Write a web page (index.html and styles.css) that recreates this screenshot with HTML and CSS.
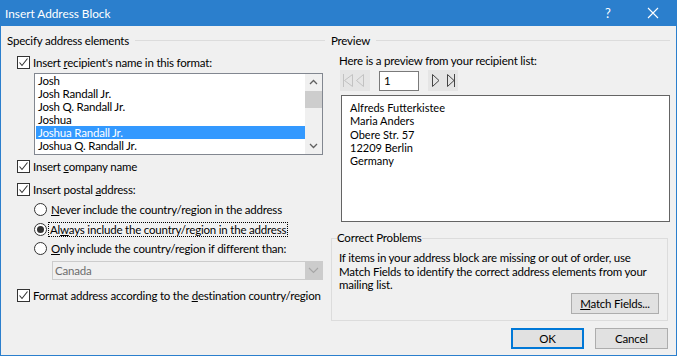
FILE: index.html
```html
<!DOCTYPE html>
<html>
<head>
<meta charset="utf-8">
<link rel="stylesheet" href="styles.css">
</head>
<body>
<div class="window">
  <div class="titlebar">
    <span class="title">Insert Address Block</span>
    <span class="help">?</span>
    <svg class="close" width="12" height="12" viewBox="0 0 12 12"><path d="M1 1L11 11M11 1L1 11" stroke="#fff" stroke-width="1.1" fill="none"/></svg>
  </div>
  <div class="client">
    <div class="col left">
      <div class="ghead"><span>Specify address elements</span><i></i></div>
      <div class="check r1"><span class="box"><svg width="11" height="11" viewBox="0 0 11 11"><path d="M1.5 5.5L4 8.5L9.5 1.5" stroke="#333" stroke-width="1.1" fill="none"/></svg></span><span>Insert <u>r</u>ecipient's name in this format:</span></div>
      <div class="listbox">
        <ul class="items">
          <li>Josh</li>
          <li>Josh Randall Jr.</li>
          <li>Josh Q. Randall Jr.</li>
          <li>Joshua</li>
          <li class="sel">Joshua Randall Jr.</li>
          <li>Joshua Q. Randall Jr.</li>
        </ul>
        <div class="vscroll">
          <svg class="arr" width="17" height="17" viewBox="0 0 17 17"><path d="M5 10L8.5 6.5L12 10" stroke="#606060" stroke-width="1.3" fill="none"/></svg>
          <div class="track"><div class="thumb"></div></div>
          <svg class="arr" width="17" height="17" viewBox="0 0 17 17"><path d="M5 7L8.5 10.5L12 7" stroke="#606060" stroke-width="1.3" fill="none"/></svg>
        </div>
      </div>
      <div class="check r2"><span class="box"><svg width="11" height="11" viewBox="0 0 11 11"><path d="M1.5 5.5L4 8.5L9.5 1.5" stroke="#333" stroke-width="1.1" fill="none"/></svg></span><span>Insert <u>c</u>ompany name</span></div>
      <div class="check r3"><span class="box"><svg width="11" height="11" viewBox="0 0 11 11"><path d="M1.5 5.5L4 8.5L9.5 1.5" stroke="#333" stroke-width="1.1" fill="none"/></svg></span><span>Insert postal <u>a</u>ddress:</span></div>
      <div class="radio ra1"><span class="circ"></span><span><u>N</u>ever include the country/region in the address</span></div>
      <div class="radio ra2"><span class="circ on"></span><span class="focus">Al<u>w</u>ays include the country/region in the address</span></div>
      <div class="radio ra3"><span class="circ"></span><span><u>O</u>nly include the country/region if different than:</span></div>
      <div class="combo"><span class="cval">Canada</span><span class="cbtn"><svg width="11" height="7" viewBox="0 0 11 7"><path d="M1 1L5.5 5.5L10 1" stroke="#a6a6a6" stroke-width="1.1" fill="none"/></svg></span></div>
      <div class="check r4"><span class="box"><svg width="11" height="11" viewBox="0 0 11 11"><path d="M1.5 5.5L4 8.5L9.5 1.5" stroke="#333" stroke-width="1.1" fill="none"/></svg></span><span>Format address according to the <u>d</u>estination country/region</span></div>
    </div>
    <div class="col right">
      <div class="ghead"><span>Preview</span><i></i></div>
      <div class="hint">Here is a preview from your recipient list:</div>
      <div class="nav">
        <div class="navbtns">
          <svg width="30" height="21" viewBox="0 0 30 21"><path d="M3.5 4V17M12.5 4.5L4.5 10.5L12.5 16.5Z" stroke="#c2c2c2" fill="none"/><path d="M23.5 4.5L16.5 10.5L23.5 16.5Z" stroke="#c2c2c2" fill="none"/></svg>
        </div>
        <div class="recno">1</div>
        <div class="navbtns">
          <svg width="30" height="21" viewBox="0 0 30 21"><path d="M4.5 4.5L11 10.5L4.5 16.5Z" stroke="#444" fill="none"/><path d="M19.5 4.5L26 10.5L19.5 16.5ZM26.5 4V17" stroke="#444" fill="none"/></svg>
        </div>
      </div>
      <div class="preview">
        <div>Alfreds Futterkistee</div>
        <div>Maria Anders</div>
        <div>Obere Str. 57</div>
        <div>12209 Berlin</div>
        <div>Germany</div>
      </div>
      <fieldset class="problems">
        <legend>Correct Problems</legend>
        <p>If items in your address block are missing or out of order, use Match Fields to identify the correct address elements from your mailing list.</p>
        <div class="mfrow"><button class="btn mf"><u>M</u>atch Fields...</button></div>
      </fieldset>
      <div class="footer">
        <button class="btn ok">OK</button>
        <button class="btn cancel">Cancel</button>
      </div>
    </div>
  </div>
</div>
</body>
</html>
```
FILE: styles.css
```css
* { box-sizing: border-box; }
body { margin: 0; font-family: Lato, "Noto Sans", sans-serif; font-size: 11.5px; letter-spacing: -0.2px; color: #000; }
.window { width: 677px; height: 356px; background: #2b7fcd; display: flex; flex-direction: column; }
.titlebar { height: 26px; display: flex; align-items: center; color: #fff; padding-left: 5px; letter-spacing: 0; }
.title { flex: 1; font-size: 11.8px; }
.help { font-size: 13px; width: 14px; margin-right: 28px; }
.close { margin-right: 18px; }
.client { flex: 1; margin: 0 1px 1px; background: #f0f0f0; display: flex; gap: 6px; padding: 6px 6px 0 6px; }
.col { display: flex; flex-direction: column; }
.left { width: 318px; }
.right { flex: 1; }
.ghead { height: 16px; display: flex; align-items: center; gap: 6px; white-space: nowrap; }
.ghead i { flex: 1; height: 1px; background: #dcdcdc; }
.check { height: 16px; display: flex; align-items: center; gap: 3px; padding-left: 10px; white-space: nowrap; }
.box { width: 13px; height: 13px; border: 1px solid #333; background: #fff; display: flex; align-items: center; justify-content: center; }
.r1 { margin-top: 6px; }
.r2 { margin-top: 3px; }
.r3 { margin-top: 7px; }
.r4 { margin-top: 7px; }
.listbox { margin: 3px 2px 0 27px; height: 82px; border: 1px solid #828790; background: #fff; display: flex; }
.items { list-style: none; margin: 0; padding: 0 0 0 1px; flex: 1; }
.items li { height: 13px; line-height: 13px; padding-left: 2px; }
.items li.sel { background: #3399ff; color: #fff; }
.vscroll { width: 17px; display: flex; flex-direction: column; background: #f0f0f0; }
.track { flex: 1; }
.thumb { height: 17px; background: #cdcdcd; margin-top: 0; }
.arr { display: block; }
.radio { height: 16px; display: flex; align-items: center; gap: 4px; padding-left: 27px; white-space: nowrap; }
.circ { width: 13px; height: 13px; border: 1px solid #333; border-radius: 50%; background: #fff; display: flex; align-items: center; justify-content: center; }
.circ.on::after { content: ""; width: 7px; height: 7px; border-radius: 50%; background: #333; }
.ra1 { margin-top: 4px; }
.ra2 { margin-top: 4px; }
.ra3 { margin-top: 3px; }
.focus { outline: 1px dotted #000; outline-offset: 0; padding: 0 1px; margin-left: -2px; }
.combo { margin: 5px 2px 0 45px; height: 19px; border: 1px solid #cccccc; background: #f0f0f0; display: flex; }
.cval { flex: 1; color: #6d6d6d; padding-left: 2px; line-height: 17px; }
.cbtn { width: 17px; background: #cccccc; display: flex; align-items: center; justify-content: center; }
.hint { margin-top: 5px; height: 16px; line-height: 16px; padding-left: 8px; }
.nav { margin-top: 1px; height: 21px; display: flex; padding-left: 9px; }
.navbtns { width: 30px; height: 21px; background: #e5e5e5; }
.navbtns svg { display: block; }
.recno { width: 40px; height: 20px; margin: 1px 9px 0; border: 1px solid #7a7a7a; background: #fff; padding-left: 4px; line-height: 18px; }
.preview { margin: 4px 0 0 10px; height: 127px; border: 1px solid #646464; background: #fff; padding: 5px 0 0 8px; font-size: 11px; line-height: 13.3px; letter-spacing: 0; }
.problems { margin: 8px 2px 0 0; padding: 0 8px 0 7px; border: 1px solid #dcdcdc; height: 91px; min-width: 0; }
.problems legend { padding: 0; margin-left: -2px; height: 16px; line-height: 16px; }
.problems p { margin: 5px 0 0 0; line-height: 13.5px; }
.mfrow { display: flex; justify-content: flex-end; margin-top: 1px; }
.btn { font-family: inherit; font-size: 11.5px; letter-spacing: inherit; color: #000; background: #e1e1e1; border: 1px solid #adadad; height: 21px; padding: 0; }
.mf { width: 88px; }
.footer { display: flex; justify-content: flex-end; gap: 11px; margin-top: 7px; padding-right: 2px; }
.ok { width: 73px; border: 2px solid #0078d7; }
.cancel { width: 73px; }
```
